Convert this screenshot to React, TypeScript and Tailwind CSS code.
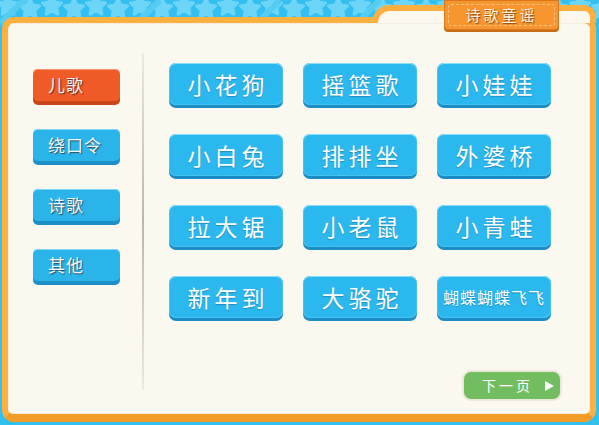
import React from "react";

const songs = [
  "小花狗", "摇篮歌", "小娃娃",
  "小白兔", "排排坐", "外婆桥",
  "拉大锯", "小老鼠", "小青蛙",
  "新年到", "大骆驼", "蝴蝶蝴蝶飞飞",
];

const cats = ["儿歌", "绕口令", "诗歌", "其他"];

function Stars() {
  const xs: number[] = [];
  for (let i = 0; i < 28; i++) xs.push(i * 22 + 8);
  return (
    <svg className="absolute left-0 top-0" width="599" height="30" viewBox="0 0 599 30">
      {xs.map((x, i) => (
        <g key={i} transform={`translate(${x} ${i % 2 ? 9 : 6})`}>
          <polygon
            points="0,-10 2.94,-4.05 9.51,-3.09 4.76,1.55 5.88,8.09 0,5 -5.88,8.09 -4.76,1.55 -9.51,-3.09 -2.94,-4.05"
            fill="#6dd6f7"
            stroke="#6dd6f7"
            strokeWidth="3"
            strokeLinejoin="round"
          />
        </g>
      ))}
      <path d="M0 24 L30 -6 M130 30 L160 0 M250 30 L280 0 M350 30 L380 0" stroke="#55cdf3" strokeWidth="6" />
    </svg>
  );
}

export default function App() {
  return (
    <div className="relative w-[599px] h-[425px] overflow-hidden bg-[#33bff0] pt-[17px] pl-[2px] font-['Noto_Sans_CJK_SC','Noto_Sans',sans-serif]">
      <Stars />
      {/* main frame */}
      <div className="relative w-[594px] h-[405px] rounded-[12px] border-[6px] border-b-[8px] border-[#fbb040] border-b-[#f39d28] bg-[#fbf8ef] shadow-[inset_0_0_0_1px_#f3eee0]">
        <div className="flex h-full">
          {/* left categories */}
          <div className="w-[134px] pl-[25px] pt-[46px] flex flex-col gap-[28px]">
            {cats.map((c, i) => (
              <div
                key={c}
                className={
                  i === 0
                    ? "w-[87px] h-[32px] rounded-[5px] bg-[#f05b28] shadow-[inset_0_1px_0_#f7916b,0_4px_0_#c9461c] flex items-center pl-[15px] text-[17px] text-[#fbf3ee] [text-shadow:1px_1px_1px_#5a2a18] tracking-[1px]"
                    : "w-[87px] h-[32px] rounded-[5px] bg-[#2ab4ea] shadow-[inset_0_1px_0_#7fd6f7,0_4px_0_#1e8fc6] flex items-center pl-[15px] text-[17px] text-[#f4f7f8] [text-shadow:1px_1px_1px_#2d4a5a] tracking-[1px]"
                }
              >
                {c}
              </div>
            ))}
          </div>
          {/* divider */}
          <div className="mt-[30px] w-[2px] h-[337px] bg-gradient-to-b from-[#ece9e0] via-[#bab5ae] to-[#ece9e0]" />
          {/* right content */}
          <div className="flex flex-col pl-[25px] pt-[40px]">
            <div className="grid grid-cols-[114px_114px_114px] gap-x-[20px] gap-y-[29px]">
              {songs.map((s) => (
                <div
                  key={s}
                  className={
                    "w-[114px] h-[42px] rounded-[7px] bg-[#2bb8ee] shadow-[inset_0_1px_0_#8adcf8,inset_0_0_0_1px_#46c2f0,0_3px_0_#1c8cc4] flex items-center justify-center text-white [text-shadow:0_1px_1px_#1f8cc0] " +
                    (s.length > 3 ? "text-[16px] tracking-[1px]" : "text-[23px] tracking-[4px] pl-[4px]")
                  }
                >
                  {s}
                </div>
              ))}
            </div>
            <div className="mt-[52px] pl-[293px]">
              <div className="w-[100px] h-[31px] rounded-[9px] bg-[#ebe7da] p-[2px]">
                <div className="w-full h-full rounded-[7px] bg-[#73bd61] flex items-center pl-[18px] text-[14px] text-white tracking-[3px]">
                  <span>下一页</span>
                  <svg className="ml-[12px]" width="9" height="10" viewBox="0 0 9 10">
                    <polygon points="0,0 9,5 0,10" fill="#ffffff" />
                  </svg>
                </div>
              </div>
            </div>
          </div>
        </div>
      </div>
      {/* raised top-right part of frame */}
      <div className="absolute left-[372px] top-[5px] w-[224px] h-[18px] rounded-tl-[18px] rounded-tr-[12px] border-[6px] border-b-0 border-[#fbb040] bg-[#fbf8ef]" />
      {/* title tab */}
      <div className="absolute left-[444px] top-0 w-[115px] h-[30px] rounded-b-[4px] bg-[#f7962e] border border-[#d8781c] shadow-[0_2px_0_#c96c16] p-[3px]">
        <div className="w-full h-full rounded-[3px] border border-dashed border-[#fcc488] flex items-center justify-center text-[15px] tracking-[3px] text-[#fdf0dc] [text-shadow:1px_1px_1px_#8a4a10]">
          诗歌童谣
        </div>
      </div>
    </div>
  );
}
